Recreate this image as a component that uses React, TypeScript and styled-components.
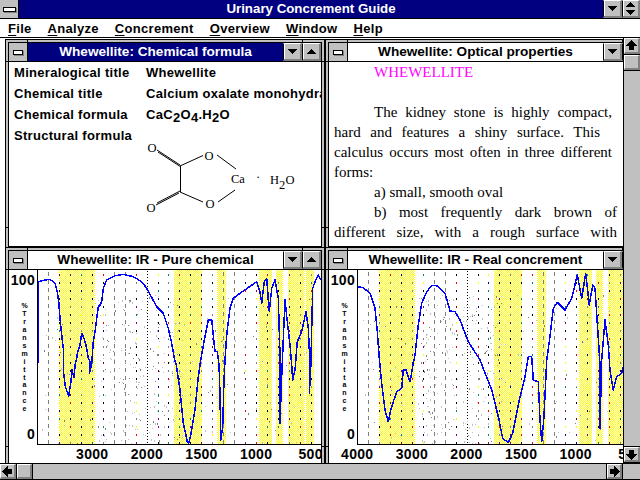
import React from "react";
import styled, { createGlobalStyle } from "styled-components";

const GRAY = "#c0c0c0";
const NAVY = "#000080";

const Global = createGlobalStyle`
  html, body { margin: 0; padding: 0; background: #fff; }
  #root { width: 640px; height: 480px; overflow: hidden; }
`;

const Screen = styled.div`
  width: 640px;
  height: 480px;
  display: flex;
  flex-direction: column;
  overflow: hidden;
  font-family: "Liberation Sans", Arial, sans-serif;
  font-weight: 700;
  color: #000;
  background: #fff;
`;

const AppBar = styled.div`
  height: 19px;
  flex: none;
  display: flex;
  box-sizing: border-box;
  border-bottom: 1px solid #000;
  background: ${NAVY};
`;

const SysBox = styled.div<{ $w: number }>`
  width: ${(p) => p.$w}px;
  flex: none;
  background: ${GRAY};
  border-right: 1px solid #000;
  box-sizing: border-box;
  display: flex;
  align-items: center;
  justify-content: center;
`;

const SysBar = styled.div<{ $w: number }>`
  width: ${(p) => p.$w}px;
  height: 3px;
  background: #fff;
  border: 1px solid #000;
  box-shadow: 1px 1px 0 #808080;
`;

const AppTitle = styled.div`
  flex: 1;
  text-align: center;
  color: #fff;
  font-size: 13.3px;
  line-height: 18px;
`;

const BevelBtn = styled.div<{ $w: number }>`
  width: ${(p) => p.$w}px;
  flex: none;
  box-sizing: border-box;
  background: ${GRAY};
  border-left: 1px solid #000;
  border-top: 1px solid #fff;
  border-right: 2px solid #808080;
  border-bottom: 2px solid #808080;
  box-shadow: inset 1px 0 0 #fff;
  display: flex;
  align-items: center;
  justify-content: center;
`;

const MenuBar = styled.div`
  height: 19px;
  flex: none;
  box-sizing: border-box;
  display: flex;
  align-items: center;
  gap: 16px;
  padding-left: 8px;
  border-bottom: 1px solid #000;
  font-size: 13px;
  letter-spacing: 0.3px;
`;

const MenuItem = styled.span`
  white-space: nowrap;
  u { text-underline-offset: 2px; }
`;

const Body = styled.div`
  height: 425px;
  flex: none;
  display: flex;
`;

const Mdi = styled.div`
  width: 623px;
  flex: none;
  box-sizing: border-box;
  overflow: hidden;
  padding: 1px 0 0 5px;
  display: grid;
  grid-template-columns: 320px 320px;
  grid-template-rows: 208px 216px;
  background: #fff;
`;

const VScroll = styled.div`
  width: 17px;
  flex: none;
  box-sizing: border-box;
  border-left: 1px solid #000;
  background: ${GRAY};
  display: flex;
  flex-direction: column;
  justify-content: space-between;
`;

const VGroup = styled.div`
  display: flex;
  flex-direction: column;
`;

const ScrollBtn = styled.div<{ $w: number; $h: number }>`
  width: ${(p) => p.$w}px;
  height: ${(p) => p.$h}px;
  flex: none;
  box-sizing: border-box;
  background: ${GRAY};
  border-top: 1px solid #fff;
  border-left: 1px solid #fff;
  border-right: 2px solid #808080;
  border-bottom: 2px solid #808080;
  display: flex;
  align-items: center;
  justify-content: center;
`;

const VSep = styled.div`
  height: 1px;
  background: #000;
`;

const HScroll = styled.div`
  height: 17px;
  flex: none;
  box-sizing: border-box;
  border-top: 1px solid #000;
  border-bottom: 1px solid #000;
  background: ${GRAY};
  display: flex;
`;

const HSep = styled.div`
  width: 1px;
  flex: none;
  background: #000;
`;

const HTrack = styled.div`
  flex: 1;
`;

const CornerBox = styled.div`
  width: 17px;
  flex: none;
  margin-left: 0;
`;

const Win = styled.div<{ $h: number }>`
  width: 320px;
  height: ${(p) => p.$h}px;
  box-sizing: border-box;
  border: 1px solid #000;
  padding: 2px;
  background:
    linear-gradient(#000, #000) 21px 0 / 1px 100% no-repeat,
    linear-gradient(#000, #000) calc(100% - 21px) 0 / 1px 100% no-repeat,
    linear-gradient(#000, #000) 0 21px / 100% 1px no-repeat,
    linear-gradient(#000, #000) 0 calc(100% - 21px) / 100% 1px no-repeat,
    ${GRAY};
`;

const WinInner = styled.div`
  height: 100%;
  box-sizing: border-box;
  border: 1px solid #000;
  display: flex;
  flex-direction: column;
  background: #fff;
  overflow: hidden;
`;

const WinBar = styled.div<{ $active?: boolean }>`
  height: 19px;
  flex: none;
  display: flex;
  box-sizing: border-box;
  border-bottom: 1px solid #000;
  background: ${(p) => (p.$active ? NAVY : "#fff")};
  color: ${(p) => (p.$active ? "#fff" : "#000")};
`;

const WinTitle = styled.div`
  flex: 1;
  text-align: center;
  font-size: 13.6px;
  line-height: 18px;
  white-space: nowrap;
  overflow: hidden;
`;

const Client = styled.div`
  flex: 1;
  min-height: 0;
  overflow: hidden;
`;

const InfoGrid = styled.div`
  display: grid;
  grid-template-columns: 132px 1fr;
  grid-auto-rows: 21px;
  padding-left: 5px;
  font-size: 13px;
  line-height: 21px;
  white-space: nowrap;
  letter-spacing: 0.3px;
`;

const Drop = styled.span`
  vertical-align: -3px;
`;

const Molecule = styled.svg`
  display: block;
`;

const MoleculeText = styled.text`
  font-family: "Liberation Serif", serif;
  font-weight: 400;
  font-size: 12.5px;
  letter-spacing: 0;
`;

const Doc = styled.div`
  padding-left: 5px;
  font-family: "Liberation Serif", "Times New Roman", serif;
  font-weight: 400;
  font-size: 15px;
  line-height: 20px;
`;

const DocLine = styled.div<{ $indent?: boolean; $end?: number; $pink?: boolean }>`
  box-sizing: border-box;
  height: 20px;
  white-space: nowrap;
  padding-left: ${(p) => (p.$indent ? 40 : 0)}px;
  color: ${(p) => (p.$pink ? "#ff00ff" : "#000")};
  ${(p) => (p.$end ? `width: ${p.$end - 334}px; white-space: normal; text-align-last: justify;` : "")}
`;

const ChartRow = styled.div`
  display: flex;
  height: 175px;
`;

const YAxis = styled.div`
  width: 28px;
  height: 174px;
  flex: none;
  box-sizing: border-box;
  padding-right: 2px;
  display: flex;
  flex-direction: column;
  align-items: flex-end;
`;

const YValue = styled.div`
  font-size: 14px;
  line-height: 20px;
  letter-spacing: 0.3px;
`;

const YTitle = styled.div`
  flex: 1;
  margin: 12px 7px 0 0;
  font-size: 7px;
  font-weight: 700;
  line-height: 8px;
  writing-mode: vertical-rl;
  text-orientation: upright;
  letter-spacing: 0.95px;
  white-space: nowrap;
`;

const PlotFrame = styled.div`
  position: relative;
  width: 284px;
  height: 175px;
  flex: none;
  box-sizing: border-box;
  border-left: 1px solid #000;
  border-bottom: 1px solid #000;
`;

const Band = styled.div<{ $left: number; $width: number }>`
  position: absolute;
  top: 0;
  bottom: 0;
  left: ${(p) => p.$left}px;
  width: ${(p) => p.$width}px;
  background: repeating-conic-gradient(#ffff00 0 25%, #ffffff 0 50%) ${(p) => p.$left % 2}px 0 / 2px 2px;
`;

const PlotSvg = styled.svg`
  position: relative;
  display: block;
`;

const XAxis = styled.div<{ $pad: number }>`
  display: flex;
  padding-left: ${(p) => p.$pad}px;
  font-size: 14px;
  line-height: 19px;
  letter-spacing: 0.3px;
`;

const XTick = styled.span`
  width: 54.6px;
  flex: none;
  text-align: center;
`;

/* ---------- drawings ---------- */

const Tri = ({ up, size = 9 }: { up?: boolean; size?: number }) => (
  <svg width={size} height={5} viewBox="0 0 9 5" shapeRendering="crispEdges">
    <path d={up ? "M4.5 0 L9 5 L0 5 Z" : "M0 0 L9 0 L4.5 5 Z"} fill="#000" />
  </svg>
);

const UpDown = () => (
  <svg width={9} height={13} viewBox="0 0 9 13" shapeRendering="crispEdges">
    <path d="M4.5 0 L9 5 L0 5 Z M0 8 L9 8 L4.5 13 Z" fill="#000" />
  </svg>
);

const Arrow = ({ dir }: { dir: "up" | "down" | "left" | "right" }) => {
  const rot = { up: 0, right: 90, down: 180, left: 270 }[dir];
  return (
    <svg width={11} height={11} viewBox="0 0 11 11" shapeRendering="crispEdges">
      <path d="M5.5 0 L11 6 L8 6 L8 10 L3 10 L3 6 L0 6 Z" fill="#000" transform={`rotate(${rot} 5.5 5.5)`} />
    </svg>
  );
};

const BANDS: [number, number][] = [
  [59, 94], [174, 201], [217, 225], [259, 271], [276, 282], [288, 304], [306, 313],
];

const GRAY_LINES = new Set([0, 6, 7, 16, 17]);
const BLACK_LINES = new Set([9]);
const DOT_COLORS = ["#000", "#000", "#800000", "#000", "#ffff00", "#000080", "#808080", "#008080", "#800080", "#ff0000", "#808080"];

type Dot = { x: number; y: number; h: number; c: string };

function makeDots(seed: number): Dot[] {
  let s = seed;
  const rnd = () => {
    s = (s * 1664525 + 1013904223) % 4294967296;
    return s / 4294967296;
  };
  const dots: Dot[] = [];
  for (let i = 0; i < 25; i++) {
    const x = Math.round(10 + i * 10.95);
    if (GRAY_LINES.has(i)) {
      for (let y = 2; y < 174; y += 8) dots.push({ x, y, h: 4, c: "#808080" });
    } else if (BLACK_LINES.has(i)) {
      for (let y = 1; y < 174; y += 3) dots.push({ x, y, h: 1, c: "#000" });
    } else {
      for (let y = 4; y < 174; y += 8) {
        dots.push({ x, y, h: 2, c: DOT_COLORS[Math.floor(rnd() * DOT_COLORS.length)] });
      }
    }
  }
  for (let n = 0; n < 320; n++) {
    const inMid = rnd() < 0.6;
    const x = Math.floor(inMid ? 60 + rnd() * 85 : 4 + rnd() * 270);
    const y = Math.floor(25 + rnd() * 149);
    dots.push({ x, y, h: rnd() < 0.3 ? 2 : 1, c: rnd() < 0.7 ? "#c0c0c0" : "#808080" });
  }
  return dots;
}

const CURVE_A = [
  114,353, 114,110, 135,105, 150,103, 165,115, 172,140, 176,170, 180,220, 185,270, 190,310, 190,375, 196,425, 206,453, 212,415,
  216,375, 222,397, 226,355, 230,340, 232,325, 240,300, 245,265, 252,280, 258,300, 265,340, 270,350, 268,385, 273,365, 276,345,
  280,290, 285,260, 295,185, 300,180, 305,170, 310,130, 320,105, 345,92, 370,88, 400,95, 425,110, 440,130, 470,185, 490,205,
  505,250, 515,295, 525,350, 528,355, 540,435, 550,535, 562,590, 566,595, 572,570, 585,495, 595,395, 602,345, 612,290, 625,225,
  635,225, 640,270, 645,320, 652,320, 657,360, 660,445, 662,585, 668,545, 672,405, 675,345, 680,270, 690,190, 700,160, 720,145,
  770,110, 780,140, 785,175, 793,110, 800,100, 808,200, 815,130, 825,105, 835,160, 840,330, 840,535, 845,395, 855,165, 862,230,
  870,300, 875,360, 878,405, 885,375, 892,290, 905,260, 918,200, 925,250, 930,360, 928,445, 932,375, 938,130, 945,110, 955,90, 963,105,
];

const CURVE_B = [
  112,125, 130,128, 150,145, 165,190, 172,260, 178,340, 185,415, 195,495, 205,530, 212,495, 220,470, 230,440, 245,430, 250,375,
  258,375, 270,410, 278,365, 285,330, 295,240, 305,175, 320,140, 335,122, 350,122, 375,145, 390,198, 405,200, 420,225, 445,290,
  480,345, 515,435, 535,515, 548,580, 565,593, 578,565, 600,455, 615,395, 625,335, 635,335, 640,405, 655,410, 660,525, 665,590,
  672,515, 680,345, 688,290, 700,190, 712,172, 735,195, 755,160, 772,90, 785,160, 797,85, 808,180, 818,120, 825,130, 835,280,
  840,360, 840,550, 845,345, 855,225, 865,300, 870,375, 880,435, 890,395, 905,385, 909,365,
];

const toPoints = (c: number[]) => {
  const out: string[] = [];
  for (let i = 0; i < c.length; i += 2) {
    out.push(`${(c[i] / 3 - 38).toFixed(1)},${(c[i + 1] / 3 - 25).toFixed(1)}`);
  }
  return out.join(" ");
};

const Plot = ({ curve, seed }: { curve: number[]; seed: number }) => (
  <PlotSvg width={283} height={174} viewBox="0 0 283 174" shapeRendering="crispEdges">
    {makeDots(seed).map((d, i) => (
      <rect key={i} x={d.x} y={d.y} width={1} height={d.h} fill={d.c} />
    ))}
    <polyline points={toPoints(curve)} fill="none" stroke="#0000ff" strokeWidth={1.5} strokeLinejoin="round" />
  </PlotSvg>
);

const Structure = () => (
  <Molecule width={170} height={105} viewBox="146 125 170 105">
    <g stroke="#000" strokeWidth={1} fill="none">
      <path d="M157 150 L180 165 M158 152 L181 167" />
      <path d="M157 203 L180 191 M156 205 L179 193" />
      <path d="M180.5 166 L180.5 192" />
      <path d="M180 166 L203 155.5 M180 192 L203 202" />
      <path d="M217 155 L236 169 M218 202 L235 190" />
    </g>
    <MoleculeText x={147.5} y={151.5}>O</MoleculeText>
    <MoleculeText x={204.5} y={159.5}>O</MoleculeText>
    <MoleculeText x={146.5} y={211.5}>O</MoleculeText>
    <MoleculeText x={205.5} y={207.5}>O</MoleculeText>
    <MoleculeText x={231} y={183}>Ca</MoleculeText>
    <MoleculeText x={256} y={181}>·</MoleculeText>
    <MoleculeText x={270} y={184}>H</MoleculeText>
    <MoleculeText x={279} y={189}>2</MoleculeText>
    <MoleculeText x={285.5} y={184}>O</MoleculeText>
  </Molecule>
);

/* ---------- composed ---------- */

const ChildWindow = ({
  title,
  active,
  h,
  children,
}: {
  title: string;
  active?: boolean;
  h: number;
  children: React.ReactNode;
}) => (
  <Win $h={h}>
    <WinInner>
      <WinBar $active={active}>
        <SysBox $w={19}>
          <SysBar $w={8} />
        </SysBox>
        <WinTitle>{title}</WinTitle>
        <BevelBtn $w={19}>
          <Tri />
        </BevelBtn>
        <BevelBtn $w={19}>
          <Tri up />
        </BevelBtn>
      </WinBar>
      <Client>{children}</Client>
    </WinInner>
  </Win>
);

const Chart = ({
  labels,
  pad,
  curve,
  seed,
}: {
  labels: string[];
  pad: number;
  curve: number[];
  seed: number;
}) => (
  <>
    <ChartRow>
      <YAxis>
        <YValue>100</YValue>
        <YTitle>%Transmittance</YTitle>
        <YValue>0</YValue>
      </YAxis>
      <PlotFrame>
        {BANDS.map(([a, b]) => (
          <Band key={a} $left={a - 38} $width={b - a + 1} />
        ))}
        <Plot curve={curve} seed={seed} />
      </PlotFrame>
    </ChartRow>
    <XAxis $pad={pad}>
      {labels.map((l) => (
        <XTick key={l}>{l}</XTick>
      ))}
    </XAxis>
  </>
);

export default function App() {
  return (
    <Screen>
      <Global />
      <AppBar>
        <SysBox $w={19}>
          <SysBar $w={11} />
        </SysBox>
        <AppTitle>Urinary Concrement Guide</AppTitle>
        <BevelBtn $w={19}>
          <Tri />
        </BevelBtn>
        <BevelBtn $w={18}>
          <UpDown />
        </BevelBtn>
      </AppBar>
      <MenuBar>
        <MenuItem><u>F</u>ile</MenuItem>
        <MenuItem><u>A</u>nalyze</MenuItem>
        <MenuItem><u>C</u>oncrement</MenuItem>
        <MenuItem><u>O</u>verview</MenuItem>
        <MenuItem><u>W</u>indow</MenuItem>
        <MenuItem><u>H</u>elp</MenuItem>
      </MenuBar>
      <Body>
        <Mdi>
          <ChildWindow title="Whewellite: Chemical formula" active h={211}>
            <InfoGrid>
              <span>Mineralogical title</span>
              <span>Whewellite</span>
              <span>Chemical title</span>
              <span>Calcium oxalate monohydrate</span>
              <span>Chemical formula</span>
              <span>CaC<Drop>2</Drop>O<Drop>4</Drop>.H<Drop>2</Drop>O</span>
              <span>Structural formula</span>
              <Structure />
            </InfoGrid>
          </ChildWindow>
          <ChildWindow title="Whewellite: Optical properties" h={211}>
            <Doc>
              <DocLine $indent $pink>WHEWELLITE</DocLine>
              <DocLine />
              <DocLine $indent $end={612}>The kidney stone is highly compact,</DocLine>
              <DocLine $end={600}>hard and features a shiny surface. This</DocLine>
              <DocLine $end={612}>calculus occurs most often in three different</DocLine>
              <DocLine>forms:</DocLine>
              <DocLine $indent>a) small, smooth oval</DocLine>
              <DocLine $indent $end={617}>b) most frequently dark brown of</DocLine>
              <DocLine $end={617}>different size, with a rough surface with</DocLine>
            </Doc>
          </ChildWindow>
          <ChildWindow title="Whewellite: IR - Pure chemical" h={222}>
            <Chart seed={11} curve={CURVE_A} pad={56} labels={["3000", "2000", "1500", "1000", "500"]} />
          </ChildWindow>
          <ChildWindow title="Whewellite: IR - Real concrement" h={222}>
            <Chart seed={47} curve={CURVE_B} pad={1} labels={["4000", "3000", "2000", "1500", "1000", "500"]} />
          </ChildWindow>
        </Mdi>
        <VScroll>
          <VGroup>
            <ScrollBtn $w={16} $h={16}><Arrow dir="up" /></ScrollBtn>
            <VSep />
            <ScrollBtn $w={16} $h={15} />
            <VSep />
          </VGroup>
          <VGroup>
            <VSep />
            <ScrollBtn $w={16} $h={15}><Arrow dir="down" /></ScrollBtn>
            <VSep />
          </VGroup>
        </VScroll>
      </Body>
      <HScroll>
        <ScrollBtn $w={16} $h={15}><Arrow dir="left" /></ScrollBtn>
        <HSep />
        <ScrollBtn $w={15} $h={15} />
        <HSep />
        <HTrack />
        <HSep />
        <ScrollBtn $w={15} $h={15}><Arrow dir="right" /></ScrollBtn>
        <HSep />
        <CornerBox />
      </HScroll>
    </Screen>
  );
}
